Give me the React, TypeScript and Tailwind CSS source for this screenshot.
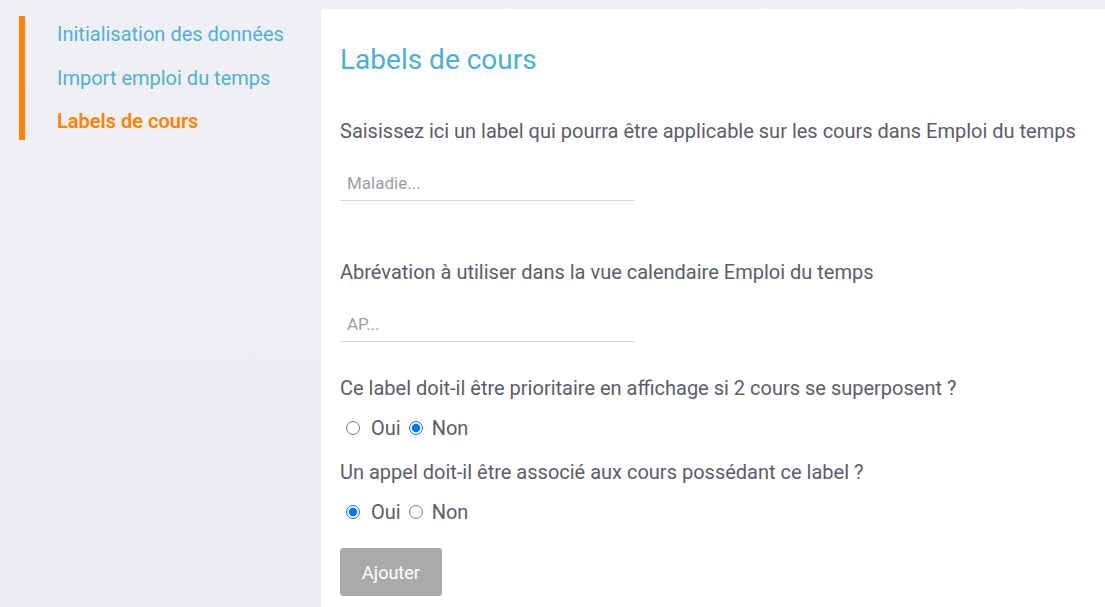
export default function App() {
  const navItems = [
    { label: 'Initialisation des données', cls: 'h-[44px] text-[#4fb0da]' },
    { label: 'Import emploi du temps', cls: 'h-[43px] text-[#4fb0da]' },
    { label: 'Labels de cours', cls: 'h-[37px] font-semibold text-[#ff8300]' },
  ];

  return (
    <div
      className="flex min-h-[607px] bg-gradient-to-b from-[#eff0f3] to-[#ecedf1] text-[#5a5d6a]"
      style={{ fontFamily: 'Roboto, "Noto Sans", sans-serif' }}
    >
      <aside className="w-[321px] shrink-0 pt-4 pl-[19px]">
        <div className="flex border-l-[6px] border-[#ff8300] pl-[32px]">
          <ul className="flex flex-col">
            {navItems.map((item) => (
              <li key={item.label} className={`text-[20px] leading-[36px] ${item.cls}`}>
                {item.label}
              </li>
            ))}
          </ul>
        </div>
      </aside>

      <main className="mt-[9px] flex-1 rounded-tl-[3px] bg-white pl-[19px] pt-[35px] pb-3">
        <h1 className="text-[28px] leading-[32px] text-[#4aaed9]">Labels de cours</h1>

        <p className="mt-[42px] text-[20px] leading-[26px]">
          Saisissez ici un label qui pourra être applicable sur les cours dans Emploi du temps
        </p>
        <input
          className="mt-[27px] block w-[295px] border-b border-[#d6d7dc] px-[7px] pb-[5px] text-[17px] leading-[24px] outline-none placeholder:text-[#9c9ea5]"
          placeholder="Maladie..."
        />

        <p className="mt-[58px] text-[20px] leading-[26px]">
          Abrévation à utiliser dans la vue calendaire Emploi du temps
        </p>
        <input
          className="mt-[27px] block w-[295px] border-b border-[#d6d7dc] px-[7px] pb-[5px] text-[17px] leading-[24px] outline-none placeholder:text-[#9c9ea5]"
          placeholder="AP..."
        />

        <p className="mt-[33px] text-[20px] leading-[26px]">
          Ce label doit-il être prioritaire en affichage si 2 cours se superposent ?
        </p>
        <div className="mt-[14px] flex items-center text-[20px] leading-[26px]">
          <input type="radio" name="prio" className="ml-[6px] mr-[11px] h-[14px] w-[14px]" />
          <span>Oui</span>
          <input type="radio" name="prio" defaultChecked className="ml-[8px] mr-[9px] h-[14px] w-[14px]" />
          <span>Non</span>
        </div>

        <p className="mt-[18px] text-[20px] leading-[26px]">
          Un appel doit-il être associé aux cours possédant ce label ?
        </p>
        <div className="mt-[14px] flex items-center text-[20px] leading-[26px]">
          <input type="radio" name="appel" defaultChecked className="ml-[6px] mr-[11px] h-[14px] w-[14px]" />
          <span>Oui</span>
          <input type="radio" name="appel" className="ml-[8px] mr-[9px] h-[14px] w-[14px]" />
          <span>Non</span>
        </div>

        <button className="mt-[23px] h-[48px] w-[102px] rounded-[3px] bg-[#aaaaaa] text-[18px] text-white">
          Ajouter
        </button>
      </main>
    </div>
  );
}
